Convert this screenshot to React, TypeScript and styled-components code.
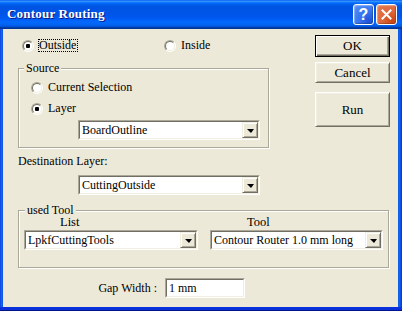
import styled, { createGlobalStyle } from "styled-components";

const GlobalStyle = createGlobalStyle`
  html, body { margin: 0; padding: 0; background: #ffffff; }
  body { font-family: "Liberation Serif", "Times New Roman", serif; font-size: 12px; color: #000; }
`;

const Window = styled.div`
  width: 402px;
  height: 311px;
  box-sizing: border-box;
  padding: 0 4px 4px 3px;
  background: linear-gradient(to right, #0831d9 0, #166aee 1px, #0855dd 3px, #0855dd calc(100% - 4px), #166aee calc(100% - 3px), #0831d9 100%);
  display: flex;
  flex-direction: column;
  box-shadow: inset 0 -1px 0 #00138c, inset 0 -4px 0 #0831d9;
`;

const TitleBar = styled.div`
  height: 29px;
  margin: 0 -4px 0 -3px;
  padding: 0 5px 0 7px;
  display: flex;
  align-items: center;
  background: linear-gradient(
    to bottom,
    #0058ee 0%,
    #3a93ff 4%,
    #288eff 6%,
    #127dff 8%,
    #036ffc 10%,
    #0262ee 14%,
    #0057e5 20%,
    #0054e3 24%,
    #0055eb 56%,
    #005bf5 66%,
    #026afe 76%,
    #0062ef 86%,
    #0052d6 92%,
    #0040ab 94%,
    #003092 100%
  );
`;

const Title = styled.span`
  flex: 1;
  color: #fff;
  font-weight: bold;
  font-size: 13px;
  letter-spacing: 0.2px;
  text-shadow: 1px 1px 0 #0a1883;
  padding-bottom: 1px;
`;

const CaptionButton = styled.div<{ $kind: "help" | "close" }>`
  width: 21px;
  height: 21px;
  box-sizing: border-box;
  margin-left: 2px;
  border: 1px solid #fff;
  border-radius: 3px;
  display: flex;
  align-items: center;
  justify-content: center;
  color: #fff;
  font-family: "Liberation Sans", Arial, sans-serif;
  font-weight: bold;
  font-size: 16px;
  background: ${(p) =>
    p.$kind === "close"
      ? "radial-gradient(circle at 80% 85%, #cc4614 0%, #e0673b 45%, #e57a52 100%)"
      : "radial-gradient(circle at 80% 85%, #1d53d9 0%, #3a78f0 50%, #5b91f7 100%)"};
  box-shadow: inset -1px -1px 1px rgba(0, 0, 0, 0.25), inset 1px 1px 1px rgba(255, 255, 255, 0.35);
`;

const Body = styled.div`
  flex: 1;
  background: #ece9d8;
  display: flex;
  flex-direction: column;
`;

const TopArea = styled.div`
  display: flex;
  align-items: flex-start;
  padding-top: 6px;
`;

const LeftCol = styled.div`
  margin-left: 15px;
  margin-top: 4px;
  width: 252px;
  display: flex;
  flex-direction: column;
`;

const RadioRow = styled.div`
  display: grid;
  grid-template-columns: 142px auto;
  padding-left: 4px;
  height: 13px;
  align-items: center;
`;

const Option = styled.div`
  display: flex;
  align-items: center;
  gap: 4px;
  height: 13px;
`;

const RadioOuter = styled.span`
  width: 12px;
  height: 12px;
  box-sizing: border-box;
  border-radius: 50%;
  border: 1px solid;
  border-color: #aca899 #ffffff #ffffff #aca899;
  display: flex;
`;

const RadioInner = styled.span`
  flex: 1;
  border-radius: 50%;
  border: 1px solid;
  border-color: #716f64 #f1efe2 #f1efe2 #716f64;
  background: #fff;
  display: flex;
  align-items: center;
  justify-content: center;
`;

const Dot = styled.span`
  width: 4px;
  height: 4px;
  border-radius: 1px;
  background: #000;
`;

const Label = styled.span<{ $focus?: boolean }>`
  line-height: 11px;
  border: 1px dotted ${(p) => (p.$focus ? "#000" : "transparent")};
  padding: 0 1px 0 0;
  white-space: nowrap;
`;

const Group = styled.div<{ $w: number; $h: number }>`
  position: relative;
  width: ${(p) => p.$w}px;
  height: ${(p) => p.$h}px;
  box-sizing: border-box;
  border: 1px solid #aca899;
  box-shadow: inset 1px 1px 0 #fff, 1px 1px 0 #fff;
  display: flex;
  flex-direction: column;
`;

const Legend = styled.span<{ $left: number }>`
  position: absolute;
  top: -6px;
  left: ${(p) => p.$left}px;
  padding: 0 2px;
  background: #ece9d8;
  line-height: 10px;
`;

const SourceGroup = styled(Group)`
  margin-top: 16px;
  padding: 12px 0 0 12px;
`;

const SourceOptions = styled.div`
  display: flex;
  flex-direction: column;
  gap: 8px;
`;

const Combo = styled.div<{ $w: number }>`
  width: ${(p) => p.$w}px;
  height: 20px;
  box-sizing: border-box;
  border: 1px solid;
  border-color: #aca899 #ffffff #ffffff #aca899;
  display: flex;
  flex-shrink: 0;
`;

const ComboInner = styled.div`
  flex: 1;
  display: flex;
  border: 1px solid;
  border-color: #716f64 #f1efe2 #f1efe2 #716f64;
  background: #fff;
`;

const ComboText = styled.span`
  flex: 1;
  padding-left: 2px;
  line-height: 16px;
  white-space: nowrap;
  overflow: hidden;
`;

const DropButton = styled.span`
  width: 16px;
  box-sizing: border-box;
  background: #ece9d8;
  border: 1px solid;
  border-color: #f1efe2 #716f64 #716f64 #f1efe2;
  box-shadow: inset 1px 1px 0 #fff, inset -1px -1px 0 #aca899;
  display: flex;
  align-items: center;
  justify-content: center;
`;

const Arrow = styled.span`
  width: 0;
  height: 0;
  border-left: 4px solid transparent;
  border-right: 3px solid transparent;
  border-top: 4px solid #000;
  margin-top: 1px;
`;

const LayerCombo = styled.div`
  margin: 5px 0 0 47px;
`;

const FieldLabel = styled.div`
  margin-top: 7px;
  line-height: 12px;
`;

const DestCombo = styled.div`
  margin: 8px 0 0 60px;
`;

const ButtonCol = styled.div`
  margin-left: auto;
  margin-right: 8px;
  width: 75px;
  display: flex;
  flex-direction: column;
`;

const Button = styled.div<{ $h: number; $gap: number; $default?: boolean }>`
  height: ${(p) => p.$h}px;
  margin-top: ${(p) => p.$gap}px;
  box-sizing: border-box;
  background: #ece9d8;
  display: flex;
  align-items: center;
  justify-content: center;
  border: 1px solid;
  border-color: ${(p) => (p.$default ? "#000" : "#fff #716f64 #716f64 #fff")};
  box-shadow: ${(p) =>
    p.$default
      ? "inset 1px 1px 0 #fff, inset -1px -1px 0 #716f64, inset -2px -2px 0 #aca899"
      : "inset 1px 1px 0 #f1efe2, inset -1px -1px 0 #aca899"};
  font-size: 13px;
`;

const ToolGroup = styled(Group)`
  margin: 15px 0 0 15px;
  padding-top: 5px;
`;

const HeaderRow = styled.div`
  display: grid;
  grid-template-columns: 187px auto;
  padding-left: 41px;
  line-height: 12px;
  font-size: 12.5px;
`;

const ComboRow = styled.div`
  display: flex;
  gap: 12px;
  margin-top: 2px;
  padding-left: 5px;
`;

const GapRow = styled.div`
  display: flex;
  align-items: center;
  margin-top: 10px;
`;

const GapLabel = styled.span`
  width: 154px;
  text-align: right;
`;

const TextField = styled.div`
  margin-left: 8px;
  width: 80px;
  height: 20px;
  box-sizing: border-box;
  border: 1px solid;
  border-color: #aca899 #ffffff #ffffff #aca899;
  display: flex;
`;

const TextFieldInner = styled.span`
  flex: 1;
  border: 1px solid;
  border-color: #716f64 #f1efe2 #f1efe2 #716f64;
  background: #fff;
  padding-left: 2px;
  line-height: 16px;
`;

function Radio({ checked, label, focus }: { checked?: boolean; label: string; focus?: boolean }) {
  return (
    <Option>
      <RadioOuter>
        <RadioInner>{checked && <Dot />}</RadioInner>
      </RadioOuter>
      <Label $focus={focus}>{label}</Label>
    </Option>
  );
}

function Dropdown({ width, value }: { width: number; value: string }) {
  return (
    <Combo $w={width}>
      <ComboInner>
        <ComboText>{value}</ComboText>
        <DropButton>
          <Arrow />
        </DropButton>
      </ComboInner>
    </Combo>
  );
}

export default function App() {
  return (
    <>
      <GlobalStyle />
      <Window>
        <TitleBar>
          <Title>Contour Routing</Title>
          <CaptionButton $kind="help">?</CaptionButton>
          <CaptionButton $kind="close">
            <svg width="11" height="11" viewBox="0 0 11 11">
              <path d="M1.5 1.5 L9.5 9.5 M9.5 1.5 L1.5 9.5" stroke="#fff" strokeWidth="2" strokeLinecap="square" />
            </svg>
          </CaptionButton>
        </TitleBar>
        <Body>
          <TopArea>
            <LeftCol>
              <RadioRow>
                <Radio checked label="Outside" focus />
                <Radio label="Inside" />
              </RadioRow>
              <SourceGroup $w={251} $h={80}>
                <Legend $left={5}>Source</Legend>
                <SourceOptions>
                  <Radio label="Current Selection" />
                  <Radio checked label="Layer" />
                </SourceOptions>
                <LayerCombo>
                  <Dropdown width={182} value="BoardOutline" />
                </LayerCombo>
              </SourceGroup>
              <FieldLabel>Destination Layer:</FieldLabel>
              <DestCombo>
                <Dropdown width={182} value="CuttingOutside" />
              </DestCombo>
            </LeftCol>
            <ButtonCol>
              <Button $h={22} $gap={0} $default>OK</Button>
              <Button $h={21} $gap={5}>Cancel</Button>
              <Button $h={35} $gap={9}>Run</Button>
            </ButtonCol>
          </TopArea>
          <ToolGroup $w={371} $h={58}>
            <Legend $left={6}>used Tool</Legend>
            <HeaderRow>
              <span>List</span>
              <span>Tool</span>
            </HeaderRow>
            <ComboRow>
              <Dropdown width={174} value="LpkfCuttingTools" />
              <Dropdown width={173} value="Contour Router 1.0 mm long" />
            </ComboRow>
          </ToolGroup>
          <GapRow>
            <GapLabel>Gap Width :</GapLabel>
            <TextField>
              <TextFieldInner>1 mm</TextFieldInner>
            </TextField>
          </GapRow>
        </Body>
      </Window>
    </>
  );
}
